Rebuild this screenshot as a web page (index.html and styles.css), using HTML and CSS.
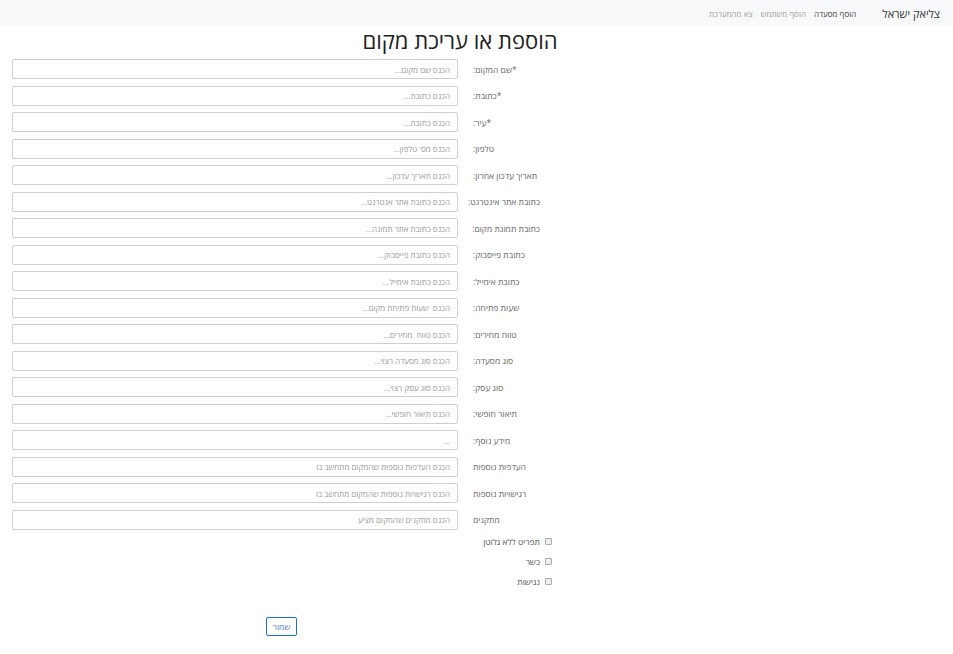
FILE: index.html
```html
<!DOCTYPE html>
<html lang="he" dir="rtl">
<head>
<meta charset="utf-8">
<title>הוספת או עריכת מקום</title>
<link rel="stylesheet" href="styles.css">
</head>
<body>
<nav class="navbar">
  <span class="brand">צליאק ישראל</span>
  <span class="nav-link active">הוסף מסעדה</span>
  <span class="nav-link">הוסף משתמש</span>
  <span class="nav-link">צא מהמערכת</span>
</nav>
<h1 class="title">הוספת או עריכת מקום</h1>
<form class="form">
  <div class="row"><label class="lbl">*שם המקום:</label><input class="field" placeholder="הכנס שם מקום..."></div>
  <div class="row"><label class="lbl">*כתובת:</label><input class="field" placeholder="הכנס כתובת..."></div>
  <div class="row"><label class="lbl">*עיר:</label><input class="field" placeholder="הכנס כתובת..."></div>
  <div class="row"><label class="lbl">טלפון:</label><input class="field" placeholder="הכנס מס' טלפון..."></div>
  <div class="row"><label class="lbl">תאריך עדכון אחרון:</label><input class="field" placeholder="הכנס תאריך עדכון..."></div>
  <div class="row"><label class="lbl">כתובת אתר אינטרנט:</label><input class="field" placeholder="הכנס כתובת אתר אנטרנט..."></div>
  <div class="row"><label class="lbl">כתובת תמונת מקום:</label><input class="field" placeholder="הכנס כתובת אתר תמונה..."></div>
  <div class="row"><label class="lbl">כתובת פייסבוק:</label><input class="field" placeholder="הכנס כתובת פייסבוק..."></div>
  <div class="row"><label class="lbl">כתובת אימייל:</label><input class="field" placeholder="הכנס כתובת אימייל..."></div>
  <div class="row"><label class="lbl">שעות פתיחה:</label><input class="field" placeholder="הכנס  שעות פתיחת מקום..."></div>
  <div class="row"><label class="lbl">טווח מחירים:</label><input class="field" placeholder="הכנס טווח  מחירים..."></div>
  <div class="row"><label class="lbl">סוג מסעדה:</label><input class="field" placeholder="הכנס סוג מסעדה רצוי..."></div>
  <div class="row"><label class="lbl">סוג עסק:</label><input class="field" placeholder="הכנס סוג עסק רצוי..."></div>
  <div class="row"><label class="lbl">תיאור חופשי:</label><input class="field" placeholder="הכנס תיאור חופשי..."></div>
  <div class="row"><label class="lbl">מידע נוסף:</label><input class="field" placeholder="..."></div>
  <div class="row"><label class="lbl">העדפות נוספות</label><input class="field" placeholder="הכנס העדפות נוספות שהמקום מתחשב בו"></div>
  <div class="row"><label class="lbl">רגישויות נוספות</label><input class="field" placeholder="הכנס רגישויות נוספות שהמקום מתחשב בו"></div>
  <div class="row"><label class="lbl">מתקנים</label><input class="field" placeholder="הכנס מתקנים שהמקום מציע"></div>
  <div class="checks">
    <label class="check"><span class="box"></span><span>תפריט ללא גלוטן</span></label>
    <label class="check"><span class="box"></span><span>כשר</span></label>
    <label class="check"><span class="box"></span><span>נגישות</span></label>
  </div>
  <div class="actions"><button type="button" class="btn">שמור</button></div>
</form>
</body>
</html>
```
FILE: styles.css
```css
* { box-sizing: border-box; }
html, body { margin: 0; padding: 0; background: #fff; }
body {
  font-family: "Open Sans", "Noto Sans", "DejaVu Sans", sans-serif;
  color: #333;
  font-size: 9px;
}
.navbar {
  height: 26px;
  background: #f8f9fa;
  display: flex;
  align-items: center;
  padding-right: 13px;
  gap: 8px;
}
.brand {
  font-size: 11px;
  color: #333;
  margin-left: 18px;
}
.nav-link {
  font-size: 8px;
  color: #a0a0a0;
  padding-top: 1px;
}
.nav-link.active { color: #444; }
.title {
  margin: 0 auto 0 0;
  height: 30px;
  line-height: 28px;
  font-size: 22px;
  font-weight: 500;
  color: #222;
  text-align: center;
  width: 920px;
}
.form {
  width: 528px;
  margin: 3px auto 0 12px;
  display: flex;
  flex-direction: column;
}
.row {
  display: flex;
  align-items: center;
  height: 20px;
  margin-bottom: 6.5px;
  gap: 6px;
}
.lbl {
  width: 76px;
  flex: none;
  text-align: left;
  padding-left: 9px;
  font-size: 8.5px;
  color: #666;
  white-space: nowrap;
}
.field {
  flex: 1;
  height: 20px;
  border: 1px solid #cfcfcf;
  border-radius: 2px;
  padding: 0 7px;
  font-family: inherit;
  font-size: 8px;
  color: #555;
  direction: rtl;
  background: #fff;
}
.field::placeholder { color: #9a9a9a; }
.checks {
  display: flex;
  flex-direction: column;
  margin-top: -1px;
  gap: 8px;
}
.check {
  display: flex;
  align-items: center;
  gap: 5px;
  height: 12px;
  font-size: 8.5px;
  color: #555;
  margin-right: -12px;
}
.box {
  width: 7px;
  height: 7px;
  border: 1px solid #aaa;
  background: #eee;
  border-radius: 1px;
  flex: none;
}
.actions {
  display: flex;
  direction: ltr;
  margin-top: 30px;
  padding-left: 254px;
}
.btn {
  width: 31px;
  height: 19px;
  border: 1px solid #1e6fd0;
  border-radius: 2px;
  background: #fff;
  color: #5a7fbf;
  font-family: inherit;
  font-size: 8.5px;
  padding: 0;
}
```
